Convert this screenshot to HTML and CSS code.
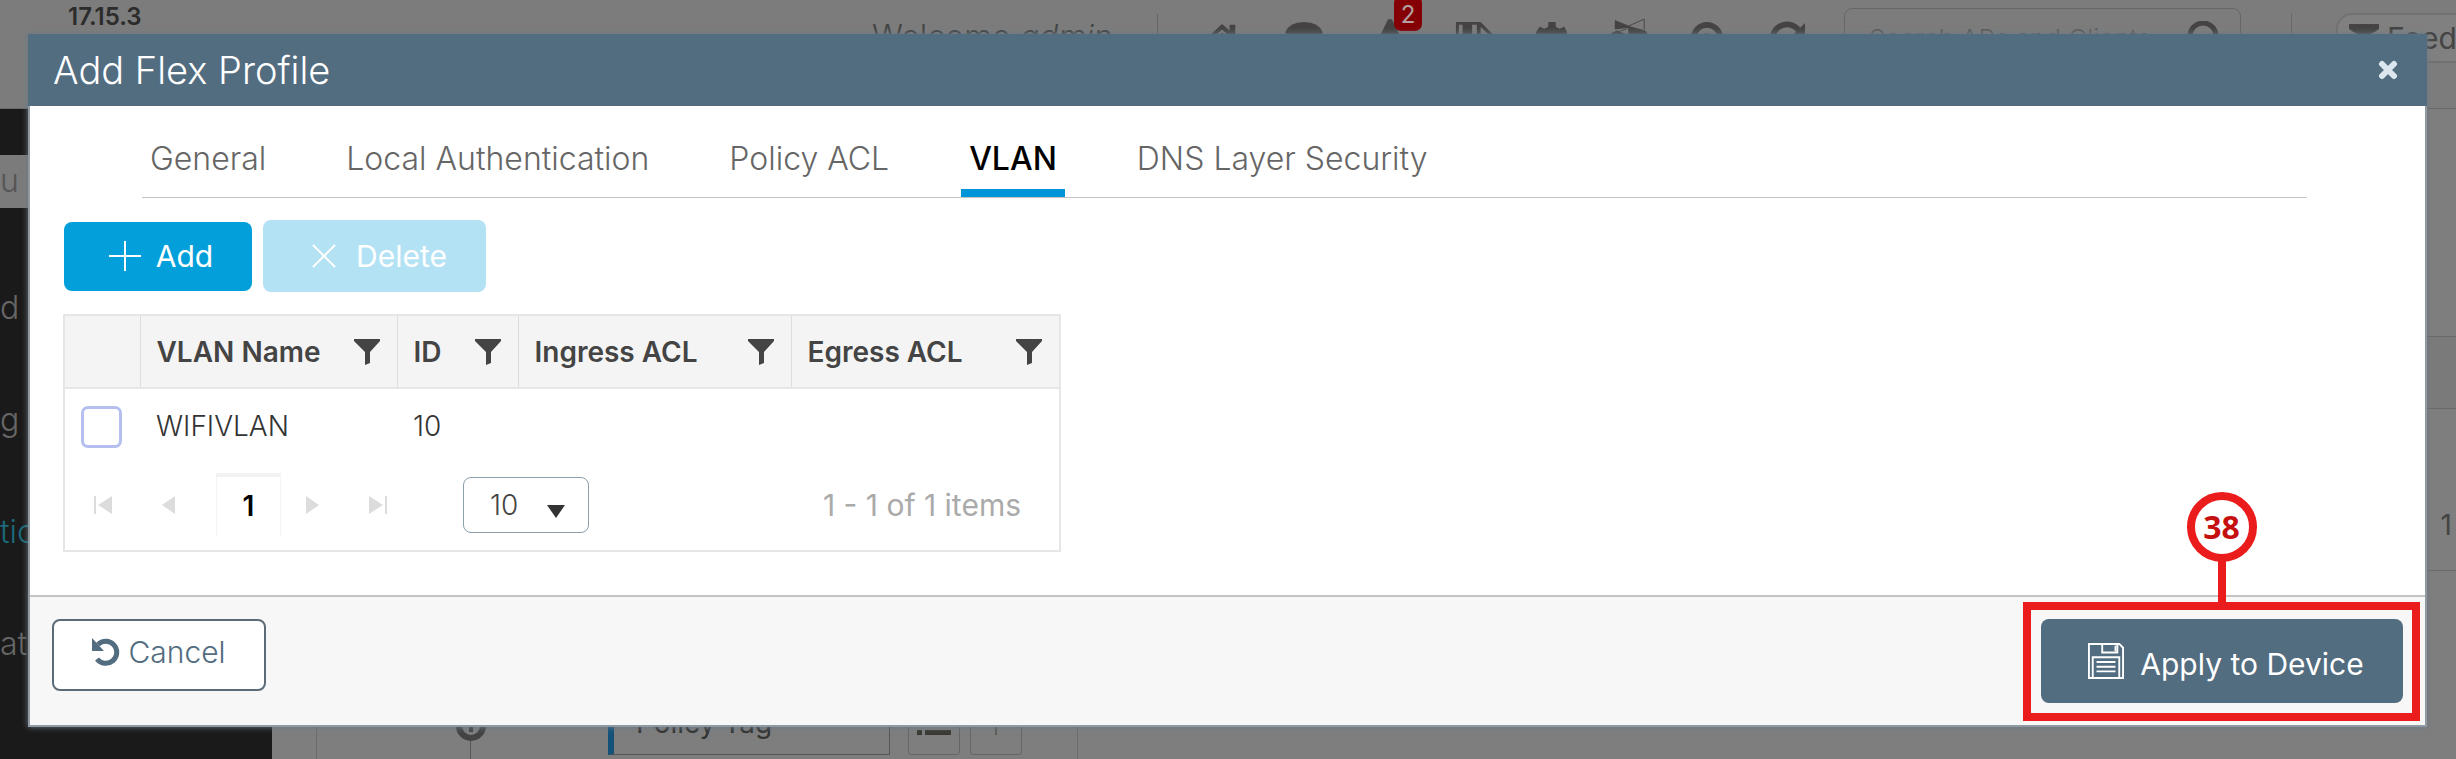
FILE: index.html
```
<!DOCTYPE html>
<html lang="en">
<head>
<meta charset="utf-8">
<title>Add Flex Profile</title>
<link rel="stylesheet" href="styles.css">
</head>
<body>
<svg width="0" height="0" class="defs" aria-hidden="true">
  <symbol id="funnel" viewBox="0 0 26 26"><path d="M0 0h26v2L16 13v11l-5 2V13L0 2z" fill="currentColor"/></symbol>
</svg>
<div class="app">
  <header class="topbar">
    <span class="version">17.15.3</span>
    <div class="tools">
      <span class="welcome">Welcome <em>admin</em></span>
      <nav class="icons" aria-label="Tools">
        <svg viewBox="0 0 40 40"><path d="M20 2L4 17l3 3 13-12 13 12 3-3-2-2V3h-6v6z"/><path d="M9 21l11-10 11 10v15h-8V25h-6v11H9z"/></svg>
        <svg viewBox="0 0 40 40"><path d="M0 11Q5 0 20 0t20 11l-4 4Q20 4 4 15z"/><path d="M2 11Q20 0 38 11L20 36z"/></svg>
        <span class="alert"><svg viewBox="0 0 40 40"><path d="M18-3h4l18 37H0z"/></svg><b class="badge">2</b></span>
        <svg viewBox="0 0 40 40"><path d="M1 0h26l12 12v26H1zM4 3v32h32V14l-9-9v11h-4V3h-5v13H8V3z" fill-rule="evenodd"/><path d="M9 2h8v13H9z"/></svg>
        <svg viewBox="0 0 40 40"><path d="M16 0h8v5l4 2 5-2 3 6-3 5v5l3 5-4 7-6-2-3 6h-7l-3-6-6 2-4-7 3-5v-5l-3-5 4-6 5 2 4-2z"/></svg>
        <svg viewBox="0 0 40 40"><path d="M5-2l15 6v2L5 8z"/><path d="M20 4L36-3V8M3 12L18 7" fill="none" stroke="currentColor" stroke-width="1"/><path d="M19 4l18 5 3 4-4 15H20zM1 12l6-3 10 4v15L4 24z"/></svg>
        <svg viewBox="0 0 40 40"><circle cx="20" cy="17" r="14" fill="none" stroke="currentColor" stroke-width="6"/><path d="M17 23h5v5h-5zM17 12h5v8h-5z"/></svg>
        <svg viewBox="0 0 40 40"><path d="M34 10A15 15 0 1 0 34 25" fill="none" stroke="currentColor" stroke-width="6"/><path d="M40 1v16H24z"/></svg>
      </nav>
      <label class="search"><input type="search" placeholder="Search APs and Clients" aria-label="Search APs and Clients"><svg viewBox="0 0 34 34"><circle cx="17" cy="15" r="13" fill="none" stroke="currentColor" stroke-width="5"/><path d="M25 24l8 9" stroke="currentColor" stroke-width="5"/></svg></label>
      <div class="feedback-wrap"><button class="feedback" type="button"><svg viewBox="0 0 30 30"><path d="M0 1h30v5Q15 18 0 6z"/></svg>Feedback</button></div>
    </div>
  </header>
  <div class="main">
    <aside class="side">
      <div class="side-search">u Items</div>
      <a href="#">d</a>
      <a href="#">g</a>
      <a href="#" class="current">tion</a>
      <a href="#">ation</a>
    </aside>
    <section class="content">
      <div class="steps"><svg class="step" viewBox="0 0 30 30"><circle cx="15" cy="15" r="12" fill="none" stroke="currentColor" stroke-width="6"/><path d="M13 5h4v16h-4z" fill="currentColor"/></svg><i class="rail"></i></div>
      <div class="form">
        <div class="field">Policy Tag</div>
        <button class="mini" type="button" aria-label="List"><svg viewBox="0 0 34 26"><path d="M0 1h5v5H0zM8 1h26v5H8zM0 11h5v5H0zM8 11h26v5H8zM0 21h5v5H0zM8 21h26v5H8z"/></svg></button>
        <button class="mini" type="button" aria-label="Add tag"><svg viewBox="0 0 34 26"><path d="M6 16h22M17 5v21" stroke="currentColor"/></svg></button>
      </div>
      <div class="list">
        <div class="list-head"></div>
        <div class="list-foot">1</div>
      </div>
    </section>
  </div>
</div>

<div class="modal" role="dialog" aria-labelledby="title">
  <header class="modal-head">
    <h1 id="title">Add Flex Profile</h1>
    <button class="close" type="button" aria-label="Close"><svg viewBox="0 0 20 20"><path d="M4 4l12 12M16 4L4 16" stroke="currentColor" stroke-width="6" stroke-linecap="round"/></svg></button>
  </header>
  <div class="modal-body">
    <nav class="tabs">
      <a href="#">General</a>
      <a href="#">Local Authentication</a>
      <a href="#">Policy ACL</a>
      <a href="#" class="active">VLAN</a>
      <a href="#">DNS Layer Security</a>
    </nav>
    <div class="actions">
      <button class="btn add" type="button"><svg viewBox="0 0 32 32"><path d="M0 16h32M16 1v30" stroke="currentColor" stroke-width="2"/></svg>Add</button>
      <button class="btn delete" type="button" disabled><svg viewBox="0 0 24 24"><path d="M1 1l22 22M23 1L1 23" stroke="currentColor" stroke-width="2"/></svg>Delete</button>
    </div>
    <div class="grid">
      <table>
        <colgroup><col class="c-check"><col class="c-name"><col class="c-id"><col class="c-in"><col class="c-out"></colgroup>
        <thead>
          <tr>
            <th></th>
            <th><div>VLAN Name<svg><use href="#funnel"/></svg></div></th>
            <th><div>ID<svg><use href="#funnel"/></svg></div></th>
            <th><div>Ingress ACL<svg><use href="#funnel"/></svg></div></th>
            <th><div>Egress ACL<svg><use href="#funnel"/></svg></div></th>
          </tr>
        </thead>
        <tbody>
          <tr><td><input type="checkbox" aria-label="Select WIFIVLAN"></td><td>WIFIVLAN</td><td>10</td><td></td><td></td></tr>
        </tbody>
      </table>
      <div class="pager">
        <button type="button" aria-label="First page"><svg viewBox="0 0 18 18"><path d="M0 0h2v18H0zM18 0v18L4 9z"/></svg></button>
        <button type="button" aria-label="Previous page"><svg viewBox="0 0 18 18"><path d="M15 0v18L2 9z"/></svg></button>
        <span class="page">1</span>
        <button type="button" aria-label="Next page"><svg viewBox="0 0 18 18"><path d="M3 0v18l13-9z"/></svg></button>
        <button type="button" aria-label="Last page"><svg viewBox="0 0 18 18"><path d="M16 0h2v18h-2zM0 0v18l14-9z"/></svg></button>
        <label class="size"><select aria-label="Items per page"><option>10</option></select><svg viewBox="0 0 18 13"><path d="M0 0h18L9 13z"/></svg></label>
        <span class="count">1 - 1 of 1 items</span>
      </div>
    </div>
  </div>
  <footer class="modal-foot">
    <button class="btn cancel" type="button"><svg viewBox="0 0 28 28"><path d="M6 6.500A11 11 0 1 1 5 21" fill="none" stroke="currentColor" stroke-width="5"/><path d="M0 0v13h12z" fill="currentColor"/></svg>Cancel</button>
    <div class="apply-wrap">
      <button class="btn apply" type="button"><svg viewBox="0 0 38 38" fill="none" stroke="currentColor" stroke-width="2"><path d="M1 1h32l4 4v32H1zM15 1v9h16V1M5 37V15h28v22"/><path d="M29 3v6M9 20h20M9 25h20M9 30h20"/></svg>Apply to Device</button>
      <div class="callout"><span class="pin">38</span></div>
    </div>
  </footer>
</div>
</body>
</html>
```
FILE: styles.css
```
* { box-sizing: border-box; }
body { margin: 0; height: 100vh; overflow: hidden; font-family: Inter, "Liberation Sans", sans-serif; font-size: 28px; color: #444; background: #7e7e7e; }
button, input, select { font: inherit; color: inherit; }
button { border: 0; background: none; padding: 0; }
a { color: inherit; text-decoration: none; }
.defs { position: absolute; }

/* Dimmed application behind the dialog */
.app { height: 100%; display: flex; flex-direction: column; overflow: hidden; color: #444; }
.topbar { display: flex; height: 109px; flex: none; border-bottom: 1px solid #6a6a6a; background: #7c7c7c; }
.version { padding: 4px 0 0 68px; font-size: 24px; line-height: 26px; font-weight: 600; color: #2c2c2c; }
.tools { margin-left: auto; display: flex; align-items: flex-start; }
.welcome { width: 286px; margin-top: 14px; border-right: 1px solid #656565; font-size: 32px; line-height: 46px; font-weight: 300; }
.icons { display: grid; grid-template-columns: 80px 84px 88px 80px 76px 78px 78px 80px; justify-items: center; margin: 22px 18px 0 24px; fill: currentColor; }
.icons svg { width: 38px; height: 38px; display: block; overflow: visible; }
.alert { position: relative; }
.badge { position: absolute; left: 23px; top: -26px; width: 28px; height: 35px; border-radius: 7px; background: #850005; color: #b5a0a0; font-size: 24px; line-height: 38px; font-weight: 400; text-align: center; }
.search { display: flex; align-items: center; width: 397px; height: 60px; margin-top: 8px; padding: 0 20px 0 24px; border: 1px solid #676767; border-radius: 8px; }
.search input { flex: 1; min-width: 0; border: 0; background: none; font-size: 26px; font-weight: 300; padding: 0; outline: 0; }
.search input::placeholder { color: #5c5c5c; opacity: 1; }
.search svg { width: 34px; height: 34px; }
.feedback-wrap { margin: 13px -60px 0 50px; display: flex; border-left: 1px solid #696969; padding-left: 44px; }
.feedback { display: flex; align-items: center; gap: 8px; width: 180px; height: 50px; padding-left: 11px; border: 2px solid #717171; border-radius: 16px; background: #808080; font-size: 30px; }
.feedback svg { width: 30px; height: 30px; flex: none; fill: currentColor; }
.main { flex: 1; display: flex; }
.side { width: 272px; flex: none; padding-top: 46px; background: #1a1a1a; color: #666; font-weight: 300; font-size: 32px; line-height: 44px; display: flex; flex-direction: column; }
.side-search { height: 53px; margin-bottom: 78px; background: #7b7b7b; color: #555; line-height: 52px; }
.side a { margin-bottom: 68px; }
.side .current { color: #1b6a7a; }
.content { flex: 1; min-width: 0; display: flex; align-items: stretch; }
.steps { width: 202px; flex: none; margin-left: 44px; border-left: 1px solid #6c6c6c; display: flex; flex-direction: column; align-items: center; padding: 602px 0 0 106px; color: #444; }
.step { width: 30px; height: 30px; flex: none; }
.rail { flex: 1; width: 1px; background: #555; }
.form { display: flex; align-items: flex-end; gap: 10px; width: 560px; padding: 0 0 4px 90px; border-right: 1px solid #6c6c6c; flex: none; }
.field { width: 282px; height: 60px; margin-right: 8px; padding-left: 22px; border: 1px solid #555; border-left: 6px solid #14527a; font-size: 28px; line-height: 54px; color: #333; }
.mini { width: 52px; height: 60px; border: 1px solid #666; border-radius: 3px; }
.mini svg { width: 34px; height: 26px; fill: currentColor; color: #3a3a33; }
.list { flex: 1; padding-top: 227px; }
.list-head { height: 73px; border: solid #696969; border-width: 1px 0; background: #7a7a7a; }
.list-foot { height: 162px; padding: 98px 4px 0 0; border-bottom: 1px solid #6a6a6a; text-align: right; line-height: 36px; font-size: 28px; }

/* Dialog */
.modal { position: absolute; inset: 34px 29px 32px 28px; display: flex; flex-direction: column; border: 2px solid #909aa2; border-top: 0; background: #fff; box-shadow: 0 0 6px #6c7a86; }
.modal-head { display: flex; align-items: center; justify-content: space-between; height: 72px; flex: none; margin: 0 -2px; padding: 0 29px 0 25px; background: #526c80; color: #fff; }
h1 { margin: 0; font-size: 38px; line-height: 48px; font-weight: 300; }
.close { width: 20px; height: 20px; color: #dbe6ee; }
.close svg { display: block; }
.modal-body { flex: 1; }
.tabs { display: flex; gap: 64px; margin: 0 118px 0 112px; border-bottom: 1px solid #c4c4c4; font-size: 32px; line-height: 40px; font-weight: 300; color: #666; }
.tabs a { padding: 33px 8px 10px; border-bottom: 8px solid transparent; }
.tabs .active { color: #000; font-weight: 500; border-bottom-color: #0095d9; }
.actions { display: flex; align-items: center; gap: 11px; margin: 22px 0 22px 34px; }
.btn { display: flex; align-items: center; justify-content: center; border-radius: 8px; font-size: 30px; line-height: 40px; font-weight: 300; }
.add { width: 188px; height: 69px; gap: 15px; padding-left: 6px; background: #039fda; color: #fff; font-weight: 400; }
.add svg { width: 32px; height: 32px; }
.delete { width: 223px; height: 72px; gap: 20px; padding-left: 10px; background: #b3e2f4; color: #fff; font-weight: 400; }
.delete svg { width: 24px; height: 24px; }
.grid { width: 998px; margin-left: 33px; border: 2px solid #e6e6e6; }
table { width: 100%; table-layout: fixed; border-collapse: collapse; }
.c-check { width: 75px; }
.c-name { width: 257px; }
.c-id { width: 121px; }
.c-in { width: 273px; }
th { height: 72px; padding: 0 17px 0 16px; background: #f4f4f4; border-right: 1px solid #ddd; border-bottom: 2px solid #e6e6e6; font-weight: 600; text-align: left; }
th:last-child { border-right: 0; }
th div { display: flex; align-items: center; justify-content: space-between; white-space: nowrap; }
th svg { width: 26px; height: 26px; flex: none; }
td { height: 74px; padding: 0 16px; color: #333; font-weight: 300; }
td input { appearance: none; display: block; width: 41px; height: 42px; margin: 3px 0 0; border: 3px solid #b4bff0; border-radius: 7px; background: #fff; }
.pager { display: flex; align-items: center; height: 88px; padding: 0 38px 2px 29px; }
.pager button { width: 18px; height: 18px; fill: #dcdcdc; margin-right: 48px; }
.pager button svg { display: block; }
.pager .page { width: 65px; height: 64px; margin: 0 22px 0 -10px; border: 1px solid #f4f4f4; border-top: 4px solid #f2f2f2; border-bottom: 0; color: #000; font-weight: 600; line-height: 58px; text-align: center; }
.size { display: flex; align-items: center; margin-left: 28px; }
.size select { appearance: none; width: 126px; height: 56px; padding: 0 26px; border: 1px solid #8aa0ac; border-radius: 8px; background: #fff; font-weight: 300; }
.size svg { width: 18px; height: 13px; margin: 12px 0 0 -42px; fill: #333; }
.count { margin-left: auto; color: #aaa; font-size: 30px; font-weight: 400; }
.modal-foot { display: flex; align-items: flex-start; justify-content: space-between; height: 130px; flex: none; padding: 22px 22px 0 22px; border-top: 2px solid #c4c4c4; background: #f7f7f7; }
.cancel { width: 214px; height: 72px; gap: 8px; padding-bottom: 6px; border: 2px solid #5c6b78; background: #fff; color: #526c80; }
.cancel svg { width: 28px; height: 28px; }
.apply-wrap { position: relative; }
.apply { width: 362px; height: 84px; gap: 16px; padding: 6px 0 0 8px; background: #526c80; color: #fff; font-weight: 400; }
.apply svg { width: 36px; height: 38px; margin-bottom: 6px; }
.callout { position: absolute; inset: -17px -17px -18px -18px; border: 8px solid #ea1c1c; display: flex; justify-content: center; }
.callout::before { content: ""; position: absolute; bottom: 100%; width: 8px; height: 50px; background: #ea1c1c; }
.pin { position: absolute; bottom: calc(100% + 48px); width: 70px; height: 70px; border: 8px solid #ea1c1c; border-radius: 50%; background: #fff; color: #c60f0f; font: bold 32px/54px "Open Sans", sans-serif; text-align: center; }
```
